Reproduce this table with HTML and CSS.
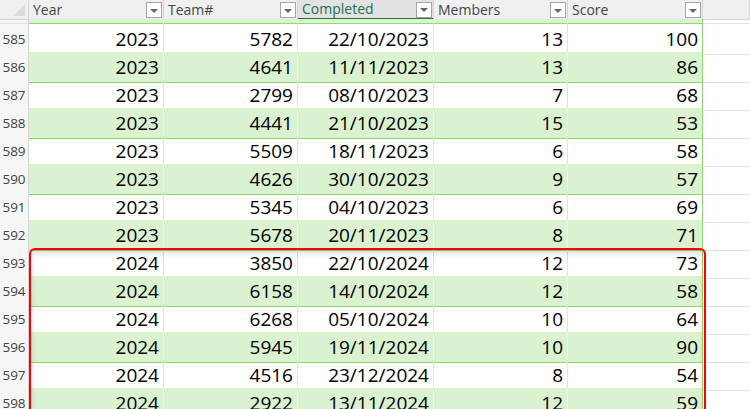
FILE: index.html
```html
<!doctype html>
<html>
<head>
<meta charset="utf-8"/>
<title>Sheet</title>
<link rel="stylesheet" href="styles.css">
</head>
<body>
<div id="sheet">
	<div class="row head">
		<div class="corner"></div>
		<div class="hcell">Year<span class="filter"></span></div>
		<div class="hcell">Team#<span class="filter"></span></div>
		<div class="hcell sel">Completed<span class="filter"></span></div>
		<div class="hcell">Members<span class="filter"></span></div>
		<div class="hcell">Score<span class="filter"></span></div>
		<div class="hcell blank"></div>
	</div>
	<div class="row part band">
		<div class="num"></div>
		<div class="c"></div><div class="c"></div><div class="c"></div><div class="c"></div><div class="c last"></div>
		<div class="out"></div>
	</div>
	<div id="rows"></div>
	<div id="mark"></div>
</div>
<script>
var data = [
	[585, 2023, 5782, '22/10/2023', 13, 100],
	[586, 2023, 4641, '11/11/2023', 13, 86],
	[587, 2023, 2799, '08/10/2023', 7, 68],
	[588, 2023, 4441, '21/10/2023', 15, 53],
	[589, 2023, 5509, '18/11/2023', 6, 58],
	[590, 2023, 4626, '30/10/2023', 9, 57],
	[591, 2023, 5345, '04/10/2023', 6, 69],
	[592, 2023, 5678, '20/11/2023', 8, 71],
	[593, 2024, 3850, '22/10/2024', 12, 73],
	[594, 2024, 6158, '14/10/2024', 12, 58],
	[595, 2024, 6268, '05/10/2024', 10, 64],
	[596, 2024, 5945, '19/11/2024', 10, 90],
	[597, 2024, 4516, '23/12/2024', 8, 54],
	[598, 2024, 2922, '13/11/2024', 12, 59]
];
var box = document.getElementById('rows');
var html = '';
for (var i = 0; i < data.length; i++) {
	var d = data[i];
	html += '<div class="row' + (d[0] % 2 == 0 ? ' band' : '') + '">';
	html += '<div class="num">' + d[0] + '</div>';
	for (var j = 1; j < 6; j++) {
		html += '<div class="c' + (j == 5 ? ' last' : '') + '">' + d[j] + '</div>';
	}
	html += '<div class="out"></div></div>';
}
box.innerHTML = html;
</script>
</body>
</html>
```

FILE: styles.css
```css
html, body {
	margin: 0;
	padding: 0;
	background: #fff;
	overflow: hidden;
}
#sheet {
	position: relative;
	width: 750px;
	height: 409px;
	overflow: hidden;
	font-family: "Open Sans", "Liberation Sans", sans-serif;
}
.row {
	display: grid;
	grid-template-columns: 29px 135px 134px 136px 134px 135px 1fr;
	height: 28px;
}
.row > div {
	box-sizing: border-box;
	border-right: 1px solid #e1e1e1;
	border-bottom: 1px solid #8ed973;
}
.head {
	height: 19px;
}
.head > div {
	background: #f0f0f0;
	border-right: 1px solid #d4d4d4;
	border-bottom: 1px solid #d4d4d4;
}
.corner {
	position: relative;
}
.corner:after {
	content: "";
	position: absolute;
	right: 3px;
	bottom: 3px;
	border-left: 12px solid transparent;
	border-bottom: 12px solid #dcdcdc;
}
.hcell {
	display: flex;
	align-items: center;
	justify-content: space-between;
	padding: 0 1px 0 4px;
	font-size: 14px;
	color: #444;
	line-height: 18px;
}
.hcell.sel {
	background: #e2e2e2;
	color: #217346;
	border-bottom: 2px solid #217346;
}
.filter {
	width: 16px;
	height: 16px;
	box-sizing: border-box;
	border: 1px solid #a6a6a6;
	background: #fff;
	display: flex;
	align-items: center;
	justify-content: center;
	margin-bottom: -1px;
}
.filter:after {
	content: "";
	border-left: 4px solid transparent;
	border-right: 4px solid transparent;
	border-top: 4px solid #666;
	margin-top: 1px;
}
.part {
	height: 5px;
}
.num {
	background: #f5f5f5;
	color: #444;
	font-size: 13.5px;
	text-align: center;
	line-height: 30px;
	border-right: 1px solid #d4d4d4 !important;
	border-bottom: 1px solid #e1e1e1 !important;
}
.c {
	text-align: right;
	padding-right: 4px;
	font-size: 19px;
	line-height: 30px;
	color: #000;
}
.band .c {
	background: #daf2d0;
	border-right-color: #e8f6e2;
}
.c.last {
	border-right: 1px solid #8ed973;
}
.band .c.last {
	border-right-color: #8ed973;
}
.out {
	border-right: none !important;
	border-bottom: 1px solid #e1e1e1 !important;
}
#mark {
	position: absolute;
	left: 29px;
	top: 248px;
	width: 677px;
	height: 200px;
	box-sizing: border-box;
	border: 2px solid #f00;
	border-radius: 6px;
	box-shadow: inset 0 4px 6px rgba(0, 0, 0, 0.12);
}
```
